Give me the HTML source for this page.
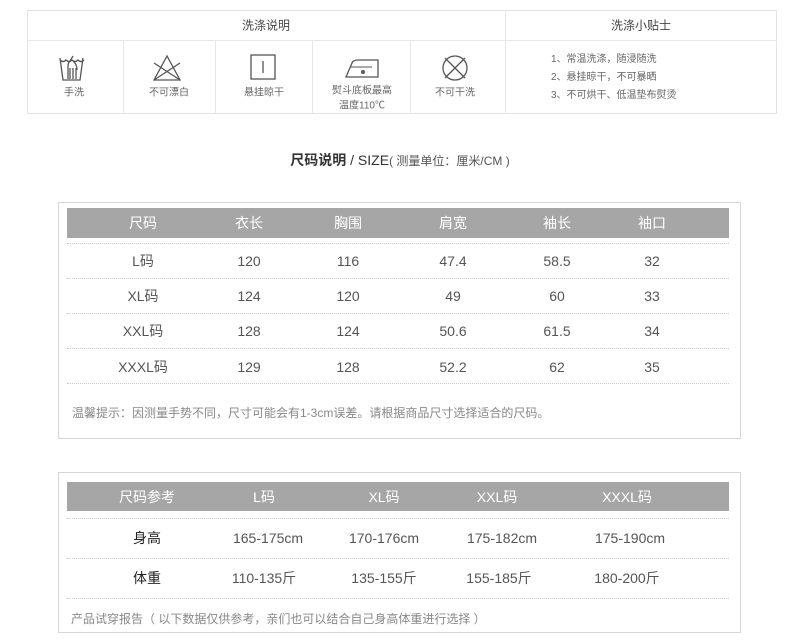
<!DOCTYPE html>
<html><head><meta charset="utf-8"><style>
*{margin:0;padding:0;box-sizing:border-box}
body{width:790px;height:642px;background:#fff;font-family:"Liberation Sans","Noto Sans CJK SC",sans-serif;color:#555;position:relative;overflow:hidden}
.a{position:absolute}
.t{position:absolute;transform:translate(-50%,-50%);white-space:nowrap}
.bx{position:absolute;border:1px solid #e2e2e2}
.hl{position:absolute;height:0;border-top:1px dotted #ccc}
.bar{position:absolute;background:#a6a6a6}
.w{color:#fff;font-size:14px}
.c{font-size:14px;color:#555}
.s{font-size:10px;color:#666}
</style></head><body>
<div class="bx" style="left:27px;top:10px;width:750px;height:104px"></div>
<div class="a" style="left:27px;top:40px;width:750px;border-top:1px solid #e8e8e8"></div>
<div class="a" style="left:505px;top:10px;height:104px;border-left:1px solid #e8e8e8"></div>
<div class="a" style="left:123px;top:40px;height:74px;border-left:1px solid #e8e8e8"></div>
<div class="a" style="left:215px;top:40px;height:74px;border-left:1px solid #e8e8e8"></div>
<div class="a" style="left:312px;top:40px;height:74px;border-left:1px solid #e8e8e8"></div>
<div class="a" style="left:410px;top:40px;height:74px;border-left:1px solid #e8e8e8"></div>
<div class="t" style="left:266px;top:25px;font-size:12px;color:#444">洗涤说明</div>
<div class="t" style="left:641px;top:25px;font-size:12px;color:#444">洗涤小贴士</div>
<svg class="a" style="left:0;top:0" width="790" height="120" fill="none" stroke="#555" stroke-width="1.3">
<path d="M60 58 L63 80 L80 80 L83 58"/><path d="M60 60 q3 3 6 0 q3 3 6 0 q3 3 6 0 q3 3 6 0"/>
<path d="M68 79 V66 q0 -3 2 -5 l3 -5 M70 79 V68 M73 79 V68 M76 79 V68 M77 70 q0 -6 -4 -9"/>
<path d="M167 56 L154 80 L180 80 Z"/><path d="M154 63 L180 80 M180 63 L154 80"/>
<rect x="251" y="55" width="24" height="24"/><path d="M263 61 V73"/>
<path d="M346 77 L352 63 Q353 60 358 60 L378 60 L378 77 Z"/><path d="M350 67 L372 67" stroke-width="1"/>
<circle cx="363" cy="72" r="1.3" fill="#555"/>
<circle cx="455" cy="68" r="12"/><path d="M445 58 L465 78 M465 58 L445 78"/>
</svg>
<div class="t s" style="left:74px;top:91px">手洗</div>
<div class="t s" style="left:169px;top:91px">不可漂白</div>
<div class="t s" style="left:264px;top:91px">悬挂晾干</div>
<div class="t s" style="left:362px;top:89px">熨斗底板最高</div>
<div class="t s" style="left:362px;top:104px">温度110℃</div>
<div class="t s" style="left:455px;top:91px">不可干洗</div>
<div class="a s" style="left:551px;top:51px;line-height:18px">1、常温洗涤，随浸随洗<br>2、悬挂晾干，不可暴晒<br>3、不可烘干、低温垫布熨烫</div>
<div class="t" style="left:400px;top:160px;font-size:14px;color:#333"><b>尺码说明</b> / SIZE<span style="font-size:12px;color:#555">( 测量单位：厘米/CM )</span></div>
<div class="bx" style="left:58px;top:202px;width:683px;height:237px;border-color:#d6d6d6"></div>
<div class="bar" style="left:67px;top:208px;width:662px;height:30px"></div>
<div class="hl" style="left:67px;top:243px;width:662px"></div>
<div class="hl" style="left:67px;top:278px;width:662px"></div>
<div class="hl" style="left:67px;top:313px;width:662px"></div>
<div class="hl" style="left:67px;top:348px;width:662px"></div>
<div class="hl" style="left:67px;top:383px;width:662px"></div>
<div class="t w" style="left:143px;top:223px">尺码</div><div class="t w" style="left:249px;top:223px">衣长</div><div class="t w" style="left:348px;top:223px">胸围</div><div class="t w" style="left:453px;top:223px">肩宽</div><div class="t w" style="left:557px;top:223px">袖长</div><div class="t w" style="left:652px;top:223px">袖口</div>
<div class="t c" style="left:143px;top:261px">L码</div><div class="t c" style="left:249px;top:261px">120</div><div class="t c" style="left:348px;top:261px">116</div><div class="t c" style="left:453px;top:261px">47.4</div><div class="t c" style="left:557px;top:261px">58.5</div><div class="t c" style="left:652px;top:261px">32</div>
<div class="t c" style="left:143px;top:296px">XL码</div><div class="t c" style="left:249px;top:296px">124</div><div class="t c" style="left:348px;top:296px">120</div><div class="t c" style="left:453px;top:296px">49</div><div class="t c" style="left:557px;top:296px">60</div><div class="t c" style="left:652px;top:296px">33</div>
<div class="t c" style="left:143px;top:331px">XXL码</div><div class="t c" style="left:249px;top:331px">128</div><div class="t c" style="left:348px;top:331px">124</div><div class="t c" style="left:453px;top:331px">50.6</div><div class="t c" style="left:557px;top:331px">61.5</div><div class="t c" style="left:652px;top:331px">34</div>
<div class="t c" style="left:143px;top:367px">XXXL码</div><div class="t c" style="left:249px;top:367px">129</div><div class="t c" style="left:348px;top:367px">128</div><div class="t c" style="left:453px;top:367px">52.2</div><div class="t c" style="left:557px;top:367px">62</div><div class="t c" style="left:652px;top:367px">35</div>
<div class="a" style="left:72px;top:404px;font-size:12px;color:#888">温馨提示：因测量手势不同，尺寸可能会有1-3cm误差。请根据商品尺寸选择适合的尺码。</div>
<div class="bx" style="left:58px;top:472px;width:683px;height:161px;border-color:#d6d6d6"></div>
<div class="bar" style="left:67px;top:482px;width:662px;height:29px"></div>
<div class="hl" style="left:67px;top:518px;width:662px"></div>
<div class="hl" style="left:67px;top:558px;width:662px"></div>
<div class="hl" style="left:67px;top:598px;width:662px"></div>
<div class="t w" style="left:147px;top:497px">尺码参考</div><div class="t w" style="left:264px;top:497px">L码</div><div class="t w" style="left:384px;top:497px">XL码</div><div class="t w" style="left:497px;top:497px">XXL码</div><div class="t w" style="left:627px;top:497px">XXXL码</div>
<div class="t c" style="left:147px;top:538px;color:#222">身高</div><div class="t c" style="left:268px;top:538px">165-175cm</div><div class="t c" style="left:384px;top:538px">170-176cm</div><div class="t c" style="left:502px;top:538px">175-182cm</div><div class="t c" style="left:630px;top:538px">175-190cm</div>
<div class="t c" style="left:147px;top:578px;color:#222">体重</div><div class="t c" style="left:264px;top:578px">110-135斤</div><div class="t c" style="left:384px;top:578px">135-155斤</div><div class="t c" style="left:499px;top:578px">155-185斤</div><div class="t c" style="left:627px;top:578px">180-200斤</div>
<div class="a" style="left:71px;top:610px;font-size:12px;color:#888">产品试穿报告（ 以下数据仅供参考，亲们也可以结合自己身高体重进行选择 ）</div>
</body></html>
